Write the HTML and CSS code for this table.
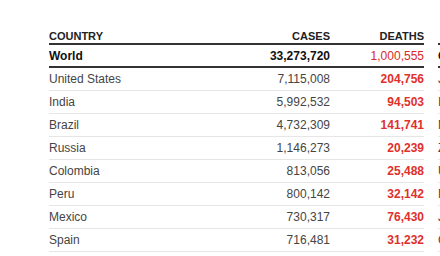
FILE: index.html
```html
<!DOCTYPE html>
<html>
<head>
<meta charset="utf-8">
<link rel="stylesheet" href="styles.css">
</head>
<body>
<div class="wrap">
<table class="tbl">
<thead>
<tr class="head"><th class="c-country">COUNTRY</th><th class="c-num">CASES</th><th class="c-num">DEATHS</th><th class="sp"></th><th class="c-extra"></th></tr>
</thead>
<tbody>
<tr class="world"><td class="c-country">World</td><td class="c-num">33,273,720</td><td class="c-num red">1,000,555</td><td class="sp"></td><td class="c-extra">Global</td></tr>
<tr><td class="c-country">United States</td><td class="c-num">7,115,008</td><td class="c-num red b">204,756</td><td class="sp"></td><td class="c-extra">Jan 21</td></tr>
<tr><td class="c-country">India</td><td class="c-num">5,992,532</td><td class="c-num red b">94,503</td><td class="sp"></td><td class="c-extra">Increasing</td></tr>
<tr><td class="c-country">Brazil</td><td class="c-num">4,732,309</td><td class="c-num red b">141,741</td><td class="sp"></td><td class="c-extra">Mixed</td></tr>
<tr><td class="c-country">Russia</td><td class="c-num">1,146,273</td><td class="c-num red b">20,239</td><td class="sp"></td><td class="c-extra">Zone</td></tr>
<tr><td class="c-country">Colombia</td><td class="c-num">813,056</td><td class="c-num red b">25,488</td><td class="sp"></td><td class="c-extra">Up</td></tr>
<tr><td class="c-country">Peru</td><td class="c-num">800,142</td><td class="c-num red b">32,142</td><td class="sp"></td><td class="c-extra">Mixed</td></tr>
<tr><td class="c-country">Mexico</td><td class="c-num">730,317</td><td class="c-num red b">76,430</td><td class="sp"></td><td class="c-extra">Jul</td></tr>
<tr><td class="c-country">Spain</td><td class="c-num">716,481</td><td class="c-num red b">31,232</td><td class="sp"></td><td class="c-extra">Growing</td></tr>
</tbody>
</table>
</div>
</body>
</html>
```
FILE: styles.css
```css
html, body {
  margin: 0;
  padding: 0;
  background: #fff;
  width: 440px;
  height: 256px;
  overflow: hidden;
}
.wrap {
  padding: 31px 0 0 49px;
  font-family: "Liberation Sans", Arial, sans-serif;
  color: #333;
}
.tbl {
  border-collapse: separate;
  border-spacing: 0;
  table-layout: fixed;
  width: 452px;
}
.tbl th, .tbl td {
  padding: 0;
  white-space: nowrap;
  overflow: hidden;
}
.c-country { width: 200px; text-align: left; }
.c-num { width: 94px; text-align: right; }
.tbl th.c-num:nth-child(2), .tbl td.c-num:nth-child(2) { width: 81px; }
.sp { width: 14px; border-bottom: none !important; }
.c-extra { width: 63px; text-align: left; }
.head th {
  font-size: 11px;
  line-height: 11px;
  font-weight: bold;
  color: #222;
  height: 11px;
  vertical-align: top;
  padding-bottom: 1px;
  border-bottom: 2px solid #333;
}
.tbl td {
  font-size: 12px;
  height: 22px;
  line-height: 14px;
  vertical-align: middle;
  border-bottom: 1px solid #e6e6e6;
  color: #444;
}
.world td {
  font-weight: bold;
  color: #111;
  border-bottom: 2px solid #333;
  height: 21px;
}
.world td.red { font-weight: normal; color: #d92a26 !important; }
.red { color: #e0302b !important; }
.b { font-weight: bold; }
```
